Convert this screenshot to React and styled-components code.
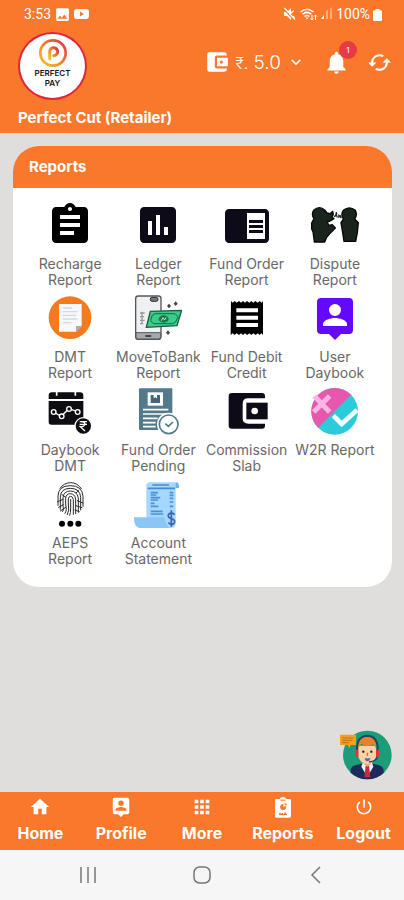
import styled, { createGlobalStyle } from "styled-components";
import {
  MdAccountBalanceWallet,
  MdApps,
  MdAssessment,
  MdAssignment,
  MdCached,
  MdChromeReaderMode,
  MdHome,
  MdImage,
  MdKeyboardArrowDown,
  MdNotifications,
  MdPowerSettingsNew,
} from "react-icons/md";

const reports = [
  { label: "Recharge\nReport", icon: <MdAssignment size={48} color="#000" /> },
  { label: "Ledger\nReport", icon: <MdAssessment size={48} color="#0d0b18" /> },
  {
    label: "Fund Order\nReport",
    icon: <ReaderIcon />,
  },
  { label: "Dispute\nReport", icon: <DisputeIcon /> },
  { label: "DMT\nReport", icon: <DmtIcon /> },
  { label: "MoveToBank\nReport", icon: <MoveToBankIcon /> },
  { label: "Fund Debit\nCredit", icon: <ReceiptIcon /> },
  { label: "User\nDaybook", icon: <PersonPinIcon size={48} color="#6508ff" /> },
  { label: "Daybook\nDMT", icon: <DaybookIcon /> },
  { label: "Fund Order\nPending", icon: <PendingIcon /> },
  { label: "Commission\nSlab", icon: <WalletIcon /> },
  { label: "W2R Report", icon: <W2rIcon /> },
  { label: "AEPS\nReport", icon: <AepsIcon /> },
  { label: "Account\nStatement", icon: <StatementIcon /> },
];

const tabs = [
  { label: "Home", icon: <MdHome size={22} /> },
  { label: "Profile", icon: <PersonPinIcon size={22} color="#fff" /> },
  { label: "More", icon: <MdApps size={22} /> },
  { label: "Reports", icon: <ClipboardIcon /> },
  { label: "Logout", icon: <MdPowerSettingsNew size={20} /> },
];

export default function App() {
  return (
    <Page>
      <GlobalStyle />
      <Header>
        <StatusBar>
          <StatusGroup>
            <span>3:53</span>
            <MdImage size={17} />
            <YoutubeIcon />
          </StatusGroup>
          <StatusGroup>
            <StatusIcons />
            <span>100%</span>
            <BatteryIcon />
          </StatusGroup>
        </StatusBar>
        <TopRow>
          <Logo>
            <LogoMark />
            <span>PERFECT</span>
            <span>PAY</span>
          </Logo>
          <Actions>
            <Balance type="button">
              <MdAccountBalanceWallet size={26} />
              <span>
                <small>₹.</small> 5.0
              </span>
              <MdKeyboardArrowDown size={20} />
            </Balance>
            <IconButton type="button" aria-label="Notifications">
              <MdNotifications size={27} />
              <Badge>1</Badge>
            </IconButton>
            <IconButton type="button" aria-label="Refresh">
              <MdCached size={25} />
            </IconButton>
          </Actions>
        </TopRow>
        <UserName>Perfect Cut (Retailer)</UserName>
      </Header>

      <Main>
        <Card>
          <CardTitle>Reports</CardTitle>
          <Grid>
            {reports.map((item) => (
              <Tile key={item.label} type="button">
                <TileIcon>{item.icon}</TileIcon>
                <TileLabel>{item.label}</TileLabel>
              </Tile>
            ))}
          </Grid>
        </Card>
        <SupportButton type="button" aria-label="Support">
          <SupportIcon />
        </SupportButton>
      </Main>

      <TabBar>
        {tabs.map((tab) => (
          <Tab key={tab.label} href="#">
            <TabIcon>{tab.icon}</TabIcon>
            {tab.label}
          </Tab>
        ))}
      </TabBar>

      <SystemBar>
        <SystemButton type="button" aria-label="Recent apps">
          <svg width="18" height="18" viewBox="0 0 18 18">
            <path d="M2 1v16M9 1v16M16 1v16" />
          </svg>
        </SystemButton>
        <SystemButton type="button" aria-label="Home screen">
          <svg width="18" height="18" viewBox="0 0 18 18">
            <rect x="1" y="1" width="16" height="16" rx="5.5" />
          </svg>
        </SystemButton>
        <SystemButton type="button" aria-label="Back">
          <svg width="18" height="18" viewBox="0 0 18 18">
            <path d="M13 1L5 9l8 8" />
          </svg>
        </SystemButton>
      </SystemBar>
    </Page>
  );
}

function YoutubeIcon() {
  return (
    <svg width="15" height="12" viewBox="0 0 15 12">
      <path
        fill="currentColor"
        fillRule="evenodd"
        d="M3 1h9q3 0 3 3v4q0 3-3 3H3Q0 11 0 8V4q0-3 3-3zM6 3.6v4.8L10 6z"
      />
    </svg>
  );
}

function StatusIcons() {
  return (
    <svg width="50" height="14" viewBox="0 0 50 14">
      <g fill="#fff">
        <path d="M1 5h3l4-4v12L4 9H1z" />
        <path d="M8 5l3-2v1L8 7zM8 8l4 2v1L8 9z" />
        <path d="M43 12V4l2-1v9zM47 12V2l2-2v12z" opacity=".4" />
        <path d="M38 12l3-4v4z" />
      </g>
      <path d="M0 1l11 12" stroke="#f9782c" strokeWidth="1.4" />
      <path d="M1.4 1l10.6 11.5" stroke="#fff" strokeWidth="1.2" />
      <g fill="none" stroke="#fff" strokeWidth="1.5">
        <path d="M17.500 5Q24-.5 30.500 5" />
        <path d="M19.500 7.300Q24 3.500 28.500 7.300" />
        <path d="M21.500 9.500Q24 7.500 26.500 9.500" />
      </g>
      <path d="M22.500 10.500h3L24 12.500z" fill="#fff" />
      <path
        d="M29 8v5M27.500 11.500l1.500 1.500 1.500-1.500M32.500 13V8M31 9.500L32.500 8 34 9.500"
        stroke="#fff"
        fill="none"
      />
    </svg>
  );
}

function BatteryIcon() {
  return (
    <svg width="9" height="13" viewBox="0 0 9 13">
      <path
        d="M2.500 1h4v1.200H8q1 0 1 1V12q0 1-1 1H1q-1 0-1-1V3.200q0-1 1-1h1.500z"
        fill="currentColor"
      />
    </svg>
  );
}

function LogoMark() {
  return (
    <svg width="30" height="30" viewBox="0 0 90 90">
      <defs>
        <linearGradient id="mark" x1="1" y1="0" x2="0" y2="1">
          <stop offset="0" stopColor="#d8304a" />
          <stop offset=".45" stopColor="#f0782a" />
          <stop offset="1" stopColor="#f8c32a" />
        </linearGradient>
      </defs>
      <g fill="none" stroke="url(#mark)">
        <circle cx="45" cy="45" r="38" strokeWidth="8" />
        <path
          d="M35 62V40a12 12 0 1 1 12 13"
          strokeWidth="9"
          strokeLinecap="round"
        />
      </g>
    </svg>
  );
}

function PersonPinIcon({ size, color }) {
  return (
    <svg width={size} height={size} viewBox="0 0 24 24">
      <path
        fill={color}
        fillRule="evenodd"
        d="M5 2h14a2 2 0 0 1 2 2v14a2 2 0 0 1-2 2h-4l-3 3-3-3H5a2 2 0 0 1-2-2V4a2 2 0 0 1 2-2zM12 5a3 3 0 1 0 0 6 3 3 0 0 0 0-6zM6 16h12v-1c0-2-4-3-6-3s-6 1-6 3z"
      />
    </svg>
  );
}

function ReaderIcon() {
  return (
    <MdChromeReaderMode size={48} color="#0d0b18" />
  );
}

function ReceiptIcon() {
  return (
    <svg width="48" height="48" viewBox="0 0 144 144">
      <path d="M24 21l5 5 6-5 6 5 7-5 6 5 6-5 6 5 6-5 7 5 6-5 6 5 6-5 7 5 6-5 6 5 4-5v102l-5-5-5 5-6-5-6 5-7-5-6 5-6-5-6 5-7-5-6 5-6-5-6 5-7-5-6 5-6-5-6 5z" />
      <path d="M40 49h65M40 71h65M40 93h65" stroke="#fff" strokeWidth="12" />
    </svg>
  );
}

function WalletIcon() {
  return (
    <svg width="48" height="48" viewBox="0 0 144 144">
      <path
        d="M27 18h90q9 0 9 10v6H76q-17 0-17 16v44q0 16 17 16h50v6q0 9-9 9H27q-10 0-10-9V28q0-10 10-10z"
        fill="#0d0b18"
      />
      <path d="M70 47h64v50H70z" fill="#0d0b18" />
      <circle cx="95" cy="72" r="10" fill="#fff" />
    </svg>
  );
}

function DisputeIcon() {
  return (
    <svg width="48" height="48" viewBox="0 0 144 144">
      <g fill="#18241c" stroke="#050806" strokeWidth="4" strokeLinejoin="round">
        <path d="M9 53Q0 40 8 28q17-16 34 0l6 8 9 2 8-7 2 9-4 8 6 5-14 8-7 2 6 10 10-2 9 10-14 14-12 14-6 14H10L6 92 2 84v-18z" />
        <path d="M97 54Q88 40 97 28q18-15 36 0 7 14-2 26l11 11-3 30-5 26H99l-4-26-5-30z" />
      </g>
      <path
        d="M69 47q7-2 7-14m3 16q-5-6-2-14m4 14l9-5m-8-3l9 10"
        fill="none"
        stroke="#18241c"
        strokeWidth="4"
      />
    </svg>
  );
}

function DmtIcon() {
  return (
    <svg width="48" height="48" viewBox="0 0 144 144">
      <circle cx="72" cy="71" r="64" fill="#f47a20" />
      <path d="M39 30h68v66l-17 17H39z" fill="#f7f8fb" />
      <path d="M107 96H90v17z" fill="#a9acb5" />
      <path
        d="M50 42h28M50 53h44M50 64h40M50 75h44M50 86h26"
        stroke="#d5d8e2"
        strokeWidth="4"
      />
    </svg>
  );
}

function MoveToBankIcon() {
  return (
    <svg width="48" height="48" viewBox="0 0 144 144">
      <rect x="5" y="6" width="76" height="130" rx="8" fill="#eff0f2" stroke="#55575b" strokeWidth="4" />
      <path d="M6 116h74v12q0 7-7 7H13q-7 0-7-7z" fill="#a5a8ad" stroke="#55575b" strokeWidth="3" />
      <path d="M34 126h18" stroke="#333" strokeWidth="5" />
      <rect x="49" y="10" width="23" height="12" rx="5" fill="#777" stroke="#333" strokeWidth="3" />
      <path d="M18 57h14M18 68h12M18 79h14M18 89h10M24 53v36" stroke="#999" strokeWidth="4" />
      <path d="M49 52l94-3-14 46-92 5z" fill="#38ce87" stroke="#20563f" strokeWidth="4" />
      <path d="M63 59h60l9 9-7 16-9 5H58l-8-9 4-15z" fill="none" stroke="#176846" strokeWidth="3" />
      <ellipse cx="89" cy="75" rx="15" ry="11" fill="#23704d" />
      <path d="M82 80l5-9 5 7 4-8" stroke="#a8f5cd" strokeWidth="3" fill="none" />
      <path
        d="M105 29l6 7-6 7-6-7zM125 22l6 7-6 7-6-7zM102 109l6 7-6 7-6-7z"
        fill="#444"
      />
    </svg>
  );
}

function DaybookIcon() {
  return (
    <svg width="48" height="48" viewBox="0 0 144 144">
      <path d="M18 16h84q10 0 10 10v10H8V26q0-10 10-10z" fill="#0e0d12" />
      <path d="M8 42h104v71H16q-8 0-8-8z" fill="#0e0d12" />
      <path d="M32 12v14M88 12v14" stroke="#fff" strokeWidth="5" />
      <g stroke="#fff" strokeWidth="4" fill="#0e0d12">
        <path d="M22 75l24 13 22-23 28 9" fill="none" />
        <circle cx="23" cy="75" r="7" />
        <circle cx="47" cy="88" r="7" />
        <circle cx="69" cy="66" r="7" />
        <circle cx="95" cy="75" r="7" />
      </g>
      <circle cx="112" cy="117" r="25" fill="#0e0d12" stroke="#fff" strokeWidth="4" />
      <path
        d="M101 104h22M101 112h22M104 104q16 0 12 10-3 6-13 5l14 13"
        stroke="#fff"
        strokeWidth="4"
        fill="none"
      />
    </svg>
  );
}

function PendingIcon() {
  return (
    <svg width="48" height="48" viewBox="0 0 144 144">
      <rect x="15" y="4" width="100" height="125" rx="3" fill="#527a8b" />
      <rect x="41" y="16" width="46" height="40" fill="#fff" />
      <path d="M50 24h28v24H50z" fill="#3f6779" />
      <path d="M59 24v10l5-3 5 3V24" fill="#fff" />
      <path d="M27 68h76M27 81h70M27 94h44M27 107h38M27 119h38" stroke="#fff" strokeWidth="5" />
      <circle cx="104" cy="112" r="35" fill="#fff" />
      <circle cx="104" cy="112" r="28" fill="#fff" stroke="#527a8b" strokeWidth="5" />
      <path d="M94 110l9 8 14-13" fill="none" stroke="#527a8b" strokeWidth="5" />
    </svg>
  );
}

function W2rIcon() {
  return (
    <svg width="48" height="48" viewBox="0 0 144 144">
      <circle cx="71" cy="73" r="70" fill="#2ccbdc" />
      <path d="M21.500 122.500A70 70 0 0 1 120.500 23.500z" fill="#e558ad" />
      <path d="M10 27l46 48M56 27L8 75" stroke="#fbb5e4" strokeWidth="15" />
      <path d="M67 86l25 25 46-42" fill="none" stroke="#f1ffff" strokeWidth="14" />
    </svg>
  );
}

function AepsIcon() {
  return (
    <svg width="48" height="48" viewBox="0 0 144 144">
      <g fill="none" stroke="#2a2a2a" strokeWidth="3" strokeLinecap="round">
        <path d="M42 25Q54 8 74 8t32 18" />
        <path d="M36 76V48Q37 17 73 17t38 32v30" />
        <path d="M43 88V51Q44 25 73 25t31 27v38" />
        <path d="M50 95q5-6 1-17V53q2-20 22-20t24 21v43" />
        <path d="M57 100q7-9 2-25V55q1-14 14-14t16 16v44" />
        <path d="M64 104q7-12 3-32V57q1-8 7-8t8 10v44" />
        <path d="M74 58v29q0 12-3 19" />
        <path d="M35 65l16-7M38 82l14-8M43 93l16-11M94 62l16 7M90 77l18 6M87 90l13 5M58 51l-10-7M91 38l8-7" />
      </g>
      <circle cx="48" cy="131" r="9" />
      <circle cx="73" cy="131" r="9" />
      <circle cx="97" cy="131" r="9" />
    </svg>
  );
}

function StatementIcon() {
  return (
    <svg width="48" height="48" viewBox="0 0 144 144">
      <path d="M47 7h78q10 4 7 17h-7v106q0 14-14 14H37V18q0-11 10-11z" fill="#a6d7ff" />
      <path d="M125 24V12q-1-5 4-5 7 4 6 17z" fill="#6db4f0" />
      <path d="M0 112h92q1 20 15 32H16Q0 142 0 112z" fill="#8cc6f7" />
      <path d="M55 15h50M41 25h82" stroke="#3f8ed4" strokeWidth="5" />
      <path
        d="M50 38h22M50 45h17M50 53h29M50 60h22M50 70h12M50 79h23M50 94h36M50 102h38M107 38h11M107 46h11M107 55h11M107 66h11M107 79h11"
        stroke="#4b91d7"
        strokeWidth="5"
      />
      <path
        d="M122 104q-5-7-14-4-9 5-3 12 3 3 10 5 11 5 5 13-7 7-17-2M112 91v49"
        fill="none"
        stroke="#3c62b0"
        strokeWidth="5"
      />
    </svg>
  );
}

function ClipboardIcon() {
  return (
    <svg width="16" height="21" viewBox="0 0 48 63">
      <path
        d="M4 6h10q2-6 10-6t10 6h10q4 0 4 4v48q0 4-4 4H4q-4 0-4-4V10q0-4 4-4z"
        fill="#fff"
      />
      <path d="M16 8h16v3H16z" fill="#f9782c" />
      <path d="M25 20v9l9-2q0 11-11 13-8-3-8-10t10-10zM29 18q6 1 7 6l-7 1z" fill="#f9782c" />
      <path d="M12 52h24M15 52v-5M22 52v-4M30 52v-6" stroke="#f9782c" strokeWidth="4" />
    </svg>
  );
}

function SupportIcon() {
  return (
    <svg width="52" height="50" viewBox="0 0 156 150">
      <defs>
        <clipPath id="face">
          <circle cx="82" cy="75" r="73" />
        </clipPath>
      </defs>
      <circle cx="82" cy="75" r="73" fill="#1c9c79" />
      <g clipPath="url(#face)">
        <path d="M32 150v-30q2-13 18-15l22-6h20l22 6q15 3 17 15v30z" fill="#1d2a5c" />
        <path d="M68 98h28l4 12-18 30-18-30z" fill="#f4f4f8" />
        <path d="M77 107h10l4 35H73z" fill="#cf2540" />
        <path d="M71 88h22v14l-11 8-11-8z" fill="#eea878" />
      </g>
      <path d="M55 47h53v32q-4 21-26 23-23-2-27-23z" fill="#fbd3a5" />
      <path d="M53 57q-3-36 29-37 31 2 27 37l-9-14q-17 6-37-1z" fill="#e8812e" />
      <path d="M51 62q-2-44 31-45 33 2 31 45" fill="none" stroke="#234461" strokeWidth="6" />
      <path d="M112 78q0 15-25 18" fill="none" stroke="#234461" strokeWidth="4" />
      <rect x="46" y="59" width="9" height="23" rx="4" fill="#e3343e" />
      <rect x="108" y="59" width="9" height="23" rx="4" fill="#e3343e" />
      <circle cx="70" cy="65" r="3.500" fill="#222" />
      <circle cx="94" cy="65" r="3.500" fill="#222" />
      <path d="M82 68v9" stroke="#c76f49" strokeWidth="4" />
      <path d="M74 85h18q-3 9-10 9t-8-9z" fill="#7262a5" />
      <path d="M0 14h48v31H32l-4 10-5-10H0z" fill="#f2a01e" />
      <path d="M7 24h34M7 31h30M7 38h20" stroke="#bd7410" strokeWidth="3" />
    </svg>
  );
}

const GlobalStyle = createGlobalStyle`
  * {
    box-sizing: border-box;
  }
  body {
    margin: 0;
    font-family: Inter, "Liberation Sans", sans-serif;
  }
  button {
    border: none;
    background: none;
    padding: 0;
    color: inherit;
    font-family: inherit;
    cursor: pointer;
  }
  svg {
    display: block;
    flex-shrink: 0;
  }
`;

const Page = styled.div`
  display: flex;
  flex-direction: column;
  min-height: 100vh;
  background-color: #dfdedd;
`;

const Header = styled.header`
  background-color: #f9782c;
  color: #fff;
  padding: 0 12px 5px 18px;
`;

const StatusBar = styled.div`
  display: flex;
  align-items: center;
  justify-content: space-between;
  height: 28px;
  padding: 0 10px 0 6px;
  font-family: Roboto, sans-serif;
  font-size: 14px;
`;

const StatusGroup = styled.div`
  display: flex;
  align-items: center;
  gap: 3px;
`;

const TopRow = styled.div`
  display: flex;
  justify-content: space-between;
  padding-top: 4px;
`;

const Logo = styled.div`
  display: flex;
  flex-direction: column;
  align-items: center;
  width: 69px;
  height: 68px;
  padding-top: 4px;
  border: 2px solid #e0243c;
  border-radius: 50%;
  background-color: #fff;
  color: #111;
  font-size: 8px;
  font-weight: 600;
  line-height: 10px;
`;

const Actions = styled.div`
  display: flex;
  align-items: center;
  height: 60px;
  gap: 17px;
`;

const Balance = styled.button`
  display: flex;
  align-items: center;
  gap: 5px;
  font-size: 19px;
  font-weight: 300;
  white-space: nowrap;

  small {
    font-size: 16px;
  }
`;

const IconButton = styled.button`
  position: relative;
`;

const Badge = styled.span`
  position: absolute;
  top: -8px;
  right: -7px;
  width: 18px;
  border-radius: 50%;
  background-color: #e63b45;
  font-size: 8px;
  line-height: 18px;
`;

const UserName = styled.div`
  margin-top: 8px;
  font-size: 15px;
  font-weight: 700;
  line-height: 20px;
`;

const Main = styled.main`
  flex: 1;
  display: flex;
  flex-direction: column;
  padding: 13px 12px 12px 13px;
`;

const Card = styled.section`
  overflow: hidden;
  border-radius: 26px;
  background-color: #fff;
`;

const CardTitle = styled.h1`
  margin: 0;
  padding: 0 16px;
  background-color: #f9782c;
  color: #fff;
  font-size: 15px;
  font-weight: 700;
  line-height: 42px;
`;

const Grid = styled.div`
  display: grid;
  grid-template-columns: repeat(4, 1fr);
  row-gap: 6px;
  padding: 13px 13px 20px;
`;

const Tile = styled.button`
  display: flex;
  flex-direction: column;
  align-items: center;
  gap: 7px;
`;

const TileIcon = styled.span`
  display: flex;
  align-items: center;
  justify-content: center;
  height: 48px;
`;

const TileLabel = styled.span`
  color: #686868;
  font-size: 14px;
  line-height: 16px;
  white-space: pre-line;
`;

const SupportButton = styled.button`
  align-self: flex-end;
  margin-top: auto;
`;

const TabBar = styled.nav`
  display: grid;
  grid-template-columns: repeat(5, 1fr);
  height: 58px;
  background-color: #f9782c;
`;

const Tab = styled.a`
  display: flex;
  flex-direction: column;
  align-items: center;
  padding-top: 3px;
  color: #fff;
  font-size: 16px;
  font-weight: 700;
  line-height: 20px;
  text-decoration: none;
`;

const TabIcon = styled.span`
  display: flex;
  align-items: center;
  height: 24px;
  margin-bottom: 4px;
`;

const SystemBar = styled.footer`
  display: grid;
  grid-template-columns: repeat(3, 1fr);
  height: 50px;
  padding: 0 31px;
  background-color: #f6f6f6;
`;

const SystemButton = styled.button`
  display: flex;
  align-items: center;
  justify-content: center;

  svg {
    fill: none;
    stroke: #77777a;
    stroke-width: 1.5;
  }
`;
